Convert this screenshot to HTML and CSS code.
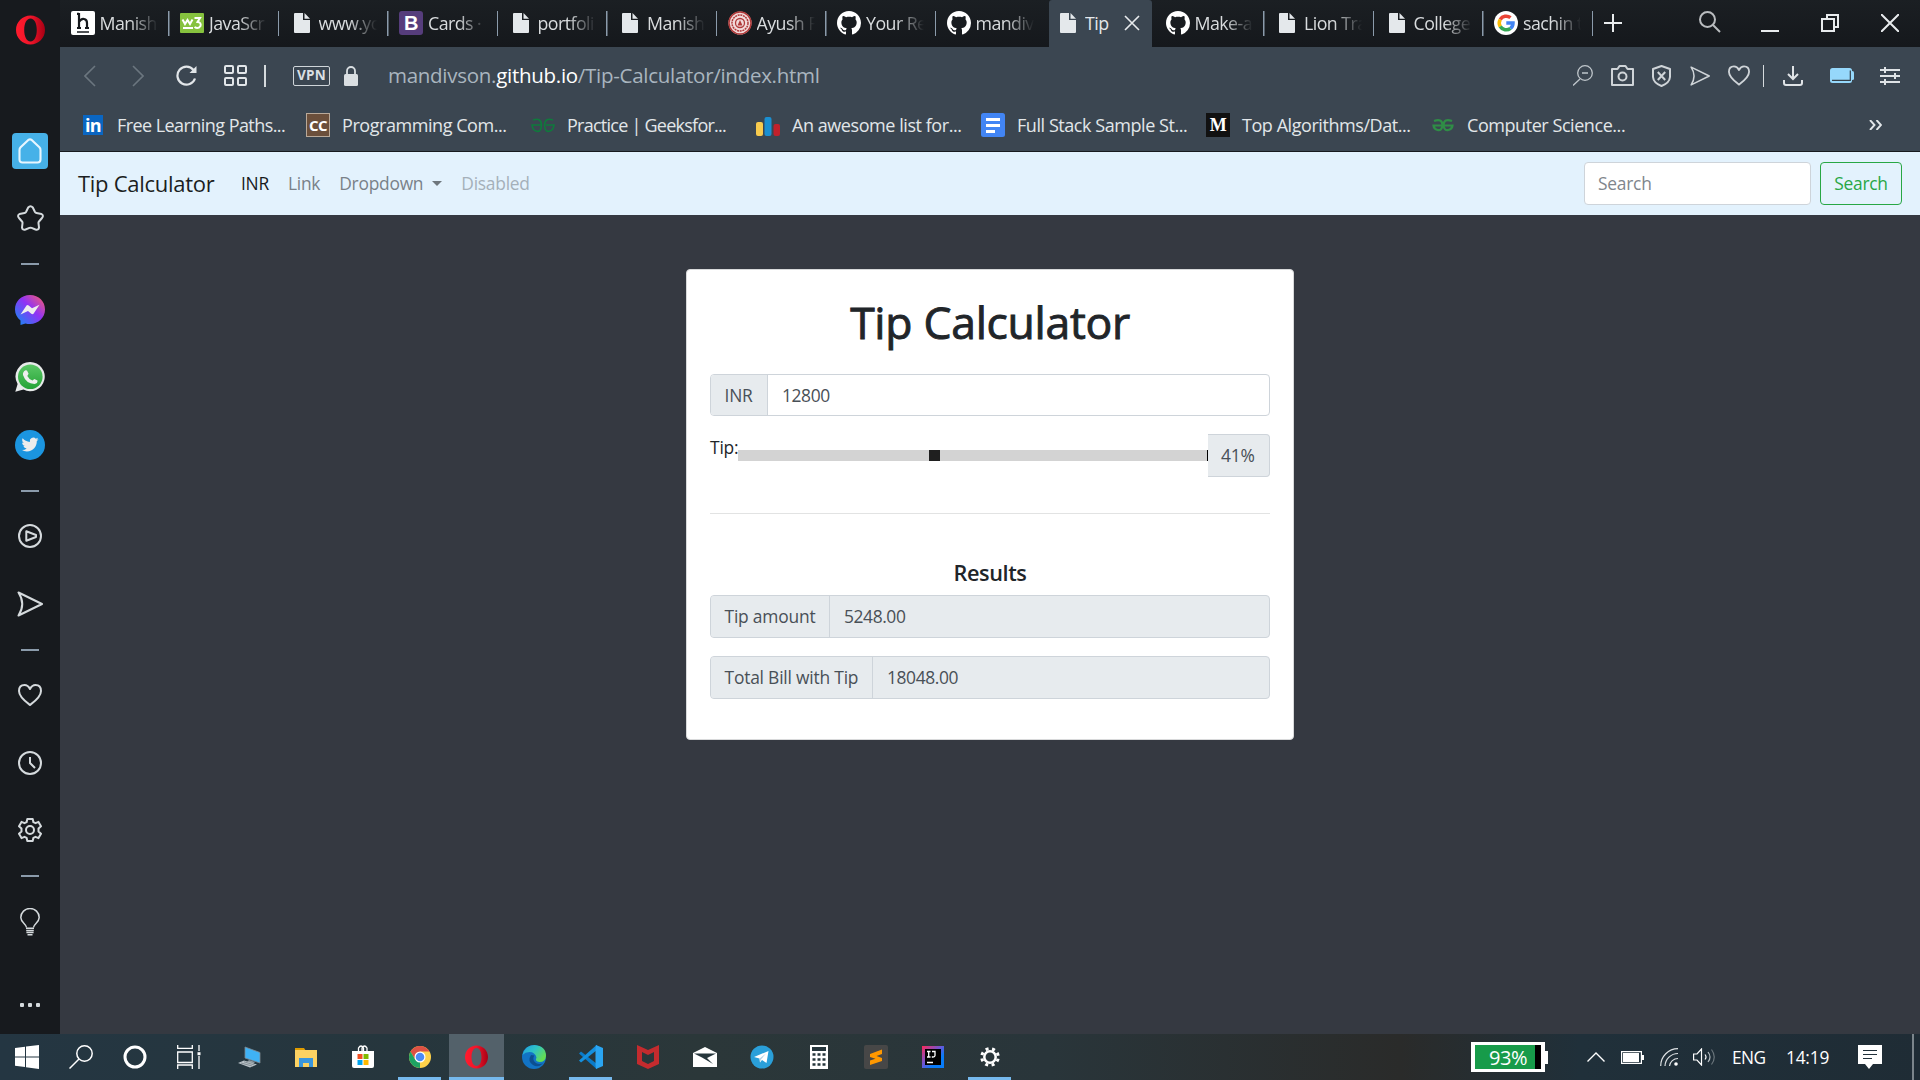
FILE: index.html
```html
<!DOCTYPE html>
<html lang="en">
<head>
<meta charset="utf-8">
<title>Tip Calculator</title>
<link rel="stylesheet" href="styles.css">
</head>
<body>
<svg class="defs" width="0" height="0">
  <defs>
    <linearGradient id="msg" x1="0" y1="1" x2="1" y2="0"><stop offset="0" stop-color="#0a90f5"/><stop offset=".55" stop-color="#9033f5"/><stop offset="1" stop-color="#ff6065"/></linearGradient>
    <linearGradient id="wa" x1="0" y1="0" x2="0" y2="1"><stop offset="0" stop-color="#5bc766"/><stop offset="1" stop-color="#25a336"/></linearGradient>
    <linearGradient id="op" x1="0" y1="0" x2="1" y2="0"><stop offset="0" stop-color="#ff1b2d"/><stop offset=".5" stop-color="#f0152a"/><stop offset="1" stop-color="#a70014"/></linearGradient>
    <linearGradient id="ed" x1="0" y1="0" x2="1" y2=".6"><stop offset="0" stop-color="#1f9ee0"/><stop offset=".5" stop-color="#2fc2c6"/><stop offset="1" stop-color="#65dd50"/></linearGradient>
    <linearGradient id="ij" x1="0" y1="0" x2="1" y2="1"><stop offset="0" stop-color="#fe2857"/><stop offset=".45" stop-color="#6b57d8"/><stop offset=".7" stop-color="#087cfa"/></linearGradient>
    <symbol id="file" viewBox="0 0 16 20"><path d="M0 1Q0 0 1 0H9V7H16V19Q16 20 15 20H1Q0 20 0 19Z" fill="#e4e8eb"/><path d="M10.500 0L16 5.800H10.500Z" fill="#e4e8eb"/></symbol>
    <symbol id="github" viewBox="0 0 16 16"><path fill="#fff" d="M8 0C3.580 0 0 3.580 0 8c0 3.540 2.290 6.530 5.470 7.590.4.070.55-.17.55-.38 0-.19-.01-.82-.01-1.490-2.010.37-2.530-.49-2.690-.94-.09-.23-.48-.94-.82-1.130-.28-.15-.68-.52-.01-.53.63-.01 1.080.58 1.230.82.72 1.210 1.870.87 2.330.66.070-.52.28-.87.51-1.070-1.780-.2-3.640-.89-3.640-3.950 0-.87.31-1.590.82-2.150-.08-.2-.36-1.020.08-2.120 0 0 .67-.21 2.200.82.64-.18 1.320-.27 2-.27s1.360.09 2 .27c1.530-1.040 2.200-.82 2.200-.82.44 1.100.16 1.920.08 2.120.51.56.82 1.270.82 2.150 0 3.070-1.870 3.750-3.650 3.950.29.25.54.73.54 1.480 0 1.070-.01 1.930-.01 2.200 0 .21.15.46.55.38A8.010 8.010 0 0 0 16 8c0-4.420-3.580-8-8-8z"/></symbol>
    <symbol id="heart" viewBox="0 0 24 22"><path d="M12 21C8 18 1 13 1 7Q1 1 6.500 1Q10 1 12 5Q14 1 17.500 1Q23 1 23 7C23 13 16 18 12 21Z" fill="none" stroke="currentColor" stroke-width="2" stroke-linejoin="round"/></symbol>
    <symbol id="send" viewBox="0 0 26 26"><path d="M1.500 1.500L25 13L1.500 24.500Q9 13 1.500 1.500Z" fill="none" stroke="currentColor" stroke-width="2" stroke-linejoin="round"/></symbol>
    <symbol id="opera" viewBox="0 0 30 30"><path fill-rule="evenodd" fill="url(#op)" d="M15 0C23.300 0 30 6.700 30 15S23.300 30 15 30S0 23.300 0 15S6.700 0 15 0ZM15 3.200C10.800 3.200 8.500 8.500 8.500 15S10.800 26.800 15 26.800S21.500 21.500 21.500 15S19.200 3.200 15 3.200Z"/></symbol>
  </defs>
</svg>
<div class="desktop">
  <div class="browser">
    <aside class="sidebar">
      <div class="side-logo"><svg width="29" height="30"><use href="#opera"/></svg></div>
      <div class="side-item"><span class="home"><svg width="24" height="26" viewBox="0 0 24 26" fill="none" stroke="#e8f6ff" stroke-width="2.100" stroke-linejoin="round"><path d="M4.500 24.500Q1.500 24.500 1.500 21.500V12Q1.500 10.500 2.600 9.300L10.300 1.900Q12 .8 13.700 1.900L21.400 9.300Q22.500 10.500 22.500 12V21.500Q22.500 24.500 19.500 24.500Z"/></svg></span></div>
      <div class="side-item"><svg width="27" height="26" viewBox="0 0 27 26" fill="none" stroke="currentColor" stroke-width="2" stroke-linejoin="round"><path d="M11.200 2.500Q13.500 0 15.800 2.500L18 7Q18.500 7.800 19.500 8L24.500 9Q27 10.500 25 13L22 16.500Q21.300 17.300 21.500 18.300L22 22.500Q21.500 25.500 18.500 24.500L14.600 22.900Q13.500 22.500 12.400 22.900L8.500 24.500Q5.500 25.500 5 22.500L5.500 18.300Q5.700 17.300 5 16.500L2 13Q0 10.500 2.500 9L7.500 8Q8.500 7.800 9 7Z"/></svg></div>
      <div class="side-rule"></div>
      <div class="side-item"><svg width="30" height="30" viewBox="0 0 30 30"><path fill="url(#msg)" d="M15 0C24 0 30 6.500 30 14.500S23.500 29 15 29Q12.500 29 10.500 28.400L5.500 30V25.500C2 22.500 0 19 0 14.500C0 6.500 6 0 15 0Z"/><path fill="#eee" d="M5.500 19.500L11.500 10.500Q12.500 9.600 13.700 10.600L17 13.300L24.500 9.700L18.500 18.700Q17.500 19.600 16.300 18.700L13 16Z"/></svg></div>
      <div class="side-item"><svg width="30" height="30" viewBox="0 0 30 30"><path fill="#e8eaea" d="M15.300 0A14.600 14.600 0 1 1 8.500 27.600L.3 29.800L2.600 22A14.600 14.600 0 0 1 15.300 0Z"/><circle cx="15.300" cy="14.800" r="12.300" fill="url(#wa)"/><path fill="#eee" d="M10.600 8.300L12 8.400L13.600 11.800L12.300 14Q14 17.300 17.500 18.600L19.300 16.900L22.500 18.500Q22.800 21.500 19.500 22Q11 21.800 8 13Q7.500 9.800 10.600 8.300Z"/></svg></div>
      <div class="side-item"><svg width="30" height="30" viewBox="0 0 30 30"><circle cx="15" cy="15" r="15" fill="#1b95e0"/><path transform="translate(6.500 6) scale(.71)" fill="#ececec" d="M23.950 4.570a10 10 0 0 1-2.820.77 4.960 4.960 0 0 0 2.160-2.720c-.95.550-2 .96-3.130 1.180a4.920 4.920 0 0 0-8.380 4.480C7.690 8.090 4.070 6.130 1.640 3.160a4.820 4.820 0 0 0-.67 2.480c0 1.710.87 3.210 2.190 4.100a4.900 4.900 0 0 1-2.230-.62v.06a4.920 4.920 0 0 0 3.950 4.830 5 5 0 0 1-2.210.08 4.940 4.940 0 0 0 4.600 3.420A9.870 9.870 0 0 1 0 19.540a14 14 0 0 0 7.550 2.210c9.050 0 14-7.500 14-13.980 0-.21 0-.42-.02-.63a9.940 9.940 0 0 0 2.420-2.570z"/></svg></div>
      <div class="side-rule"></div>
      <div class="side-item"><svg width="24" height="24" viewBox="0 0 24 24" fill="none" stroke="currentColor" stroke-width="2" stroke-linejoin="round"><circle cx="12" cy="12" r="11"/><path d="M8.300 7.300V16.700L18 13V11Z"/></svg></div>
      <div class="side-item"><svg width="26" height="26"><use href="#send"/></svg></div>
      <div class="side-rule"></div>
      <div class="side-item"><svg width="24" height="22"><use href="#heart"/></svg></div>
      <div class="side-item"><svg width="24" height="24" viewBox="0 0 24 24" fill="none" stroke="currentColor" stroke-width="2"><circle cx="12" cy="12" r="11"/><path d="M12 6V12L17 17"/></svg></div>
      <div class="side-item"><svg width="24" height="24" viewBox="0 0 24 24" fill="none" stroke="currentColor" stroke-width="2" stroke-linejoin="round"><circle cx="12" cy="12" r="4"/><path d="M9.300 1H14.700L15.400 4.200L17.500 5.200L20.500 3.900L23 8.200L20.500 10.500V13.500L23 15.800L20.500 20.100L17.500 18.800L15.400 19.800L14.700 23H9.300L8.600 19.800L6.500 18.800L3.500 20.100L1 15.800L3.500 13.500V10.500L1 8.200L3.500 3.900L6.500 5.200L8.600 4.200Z"/></svg></div>
      <div class="side-rule"></div>
      <div class="side-item"><svg width="20" height="28" viewBox="0 0 20 28" fill="none" stroke="currentColor" stroke-width="1.500"><path d="M6.500 19.500C6.500 16 .8 14.500 .8 9.500A9.200 9 0 0 1 19.200 9.500C19.200 14.500 13.500 16 13.500 19.500"/><path d="M6 20.200H14M6.200 22.400H13.800M6.400 24.600H13.600M7.500 26.800H12.500"/></svg></div>
      <div class="side-more"><i></i><i></i><i></i></div>
    </aside>
    <div class="window">
      <div class="tabs">
        <div class="tab"><svg width="24" height="24" viewBox="0 0 24 24"><rect width="24" height="24" rx="2" fill="#fff"/><path d="M8 2V17M8 11Q10 7.500 13 8Q16 8.500 16 12V17M6 17H10M14 17H18M6 2.800H8" fill="none" stroke="#15181c" stroke-width="2.200"/><path d="M6 21H18" stroke="#15181c" stroke-width="1.500"/></svg><span>Manish</span></div>
        <div class="tab"><svg width="24" height="24" viewBox="0 0 24 24"><rect y="2" width="24" height="20" rx="1" fill="#86c23e"/><path d="M2.500 8.500L5 13L7.500 9L10 13L12.500 8.500M3 17H13M14.500 7H20L17.500 11Q21.500 11.500 20.500 15Q18 18.500 14.500 16" fill="none" stroke="#fff" stroke-width="2"/></svg><span>JavaScr</span></div>
        <div class="tab"><svg class="file" width="16" height="20"><use href="#file"/></svg><span>www.yo</span></div>
        <div class="tab"><svg width="24" height="24" viewBox="0 0 24 24"><rect width="24" height="24" rx="3" fill="#563d7c"/><text x="12" y="19" text-anchor="middle" font-family="Liberation Sans" font-size="20" font-weight="700" fill="#fff">B</text></svg><span>Cards ·</span></div>
        <div class="tab"><svg class="file" width="16" height="20"><use href="#file"/></svg><span>portfoli</span></div>
        <div class="tab"><svg class="file" width="16" height="20"><use href="#file"/></svg><span>Manish</span></div>
        <div class="tab"><svg width="24" height="24" viewBox="0 0 24 24"><circle cx="12" cy="12" r="11.500" fill="#f2dada"/><g fill="none" stroke="#b03a3a"><circle cx="12" cy="12" r="11" stroke-width="1.500"/><circle cx="12" cy="12" r="8" stroke-width="1.500" stroke-dasharray="2 .7"/><circle cx="12" cy="12" r="4.500" stroke-width="1.300"/></g><path d="M12 9L14.500 14.500H9.500Z" fill="#b03a3a"/></svg><span>Ayush F</span></div>
        <div class="tab"><svg width="24" height="24"><use href="#github"/></svg><span>Your Re</span></div>
        <div class="tab last"><svg width="24" height="24"><use href="#github"/></svg><span>mandiv</span></div>
        <div class="tab active"><svg class="file" width="16" height="20"><use href="#file"/></svg><span>Tip</span><svg class="close" width="16" height="16" viewBox="0 0 16 16" stroke="#e8ebed" stroke-width="1.600"><path d="M1 1L15 15M15 1L1 15"/></svg></div>
        <div class="tab"><svg width="24" height="24"><use href="#github"/></svg><span>Make-a</span></div>
        <div class="tab"><svg class="file" width="16" height="20"><use href="#file"/></svg><span>Lion Tra</span></div>
        <div class="tab"><svg class="file" width="16" height="20"><use href="#file"/></svg><span>College</span></div>
        <div class="tab"><svg width="24" height="24" viewBox="0 0 24 24"><circle cx="12" cy="12" r="12" fill="#fff"/><g fill="none" stroke-width="3.500"><path d="M6.200 8.500A7 7 0 0 1 16.500 6.700" stroke="#ea4335"/><path d="M6.200 15.500A7 7 0 0 1 6.200 8.500" stroke="#fbbc05"/><path d="M16.500 17.300A7 7 0 0 1 6.200 15.500" stroke="#34a853"/><path d="M12.300 12H19Q19 15.500 16.500 17.300" stroke="#4285f4"/></g></svg><span>sachin t</span></div>
        <svg class="plus" width="18" height="18" viewBox="0 0 18 18" stroke="#e8ebed" stroke-width="2"><path d="M9 0V18M0 9H18"/></svg>
        <div class="controls">
          <svg width="22" height="22" viewBox="0 0 22 22" fill="none" stroke="#b9bcbf" stroke-width="2"><circle cx="8.500" cy="8.500" r="7.500"/><path d="M14 14L21 21"/></svg>
          <svg width="18" height="18" viewBox="0 0 18 18" stroke="#e8ebed" stroke-width="2"><path d="M0 17H18"/></svg>
          <svg width="18" height="18" viewBox="0 0 18 18" fill="none" stroke="#e8ebed" stroke-width="2"><path d="M1 5H13V17H1ZM6 5V1H17V13H13"/></svg>
          <svg width="18" height="18" viewBox="0 0 18 18" stroke="#e8ebed" stroke-width="2"><path d="M0 0L18 18M18 0L0 18"/></svg>
        </div>
      </div>
      <div class="toolbar">
        <div class="nav-keys">
          <svg width="12" height="22" viewBox="0 0 12 22" fill="none" stroke="#6b767f" stroke-width="1.600"><path d="M11 1L1 11L11 21"/></svg>
          <svg width="12" height="22" viewBox="0 0 12 22" fill="none" stroke="#6b767f" stroke-width="1.600"><path d="M1 1L11 11L1 21"/></svg>
          <svg width="21" height="21" viewBox="0 0 21 21" fill="none" stroke="#e2e6e9" stroke-width="2.200"><path d="M19 13.500A9 9 0 1 1 17.500 5"/><path d="M20.500 1V8H13.500Z" fill="#e2e6e9" stroke="none"/></svg>
          <svg width="23" height="21" viewBox="0 0 23 21" fill="none" stroke="#e2e6e9" stroke-width="2"><rect x="1" y="1" width="8" height="7" rx="1"/><rect x="14" y="1" width="8" height="7" rx="1"/><rect x="1" y="13" width="8" height="7" rx="1"/><rect x="14" y="13" width="8" height="7" rx="1"/></svg>
          <i class="bar"></i>
        </div>
        <span class="vpn">VPN</span>
        <svg class="lock" width="14" height="20" viewBox="0 0 14 20"><rect y="8" width="14" height="12" rx="1.500" fill="#dadfe2"/><path d="M3 8V5A4 4 0 0 1 11 5V8" fill="none" stroke="#dadfe2" stroke-width="1.800"/></svg>
        <span class="url">mandivson.<b>github.io</b>/Tip-Calculator/index.html</span>
        <div class="actions">
          <svg width="20" height="21" viewBox="0 0 20 21" fill="none" stroke="#bfc6cb" stroke-width="1.300"><circle cx="12" cy="8" r="7.300"/><path d="M7 14L0 20.500M9 8H15"/></svg>
          <svg width="23" height="21" viewBox="0 0 23 21" fill="none" stroke="#cfd4d8" stroke-width="2"><path d="M1 4H6.500L8.500 1H14.500L16.500 4H22V20H1Z" stroke-linejoin="round"/><circle cx="11.500" cy="11.500" r="4"/></svg>
          <svg width="19" height="22" viewBox="0 0 19 22" fill="none" stroke="#cfd4d8" stroke-width="2"><path d="M9.500 1L18 4V12Q17.500 18 9.500 21Q1.500 18 1 12V4Z" stroke-linejoin="round"/><path d="M5.800 7L13.200 15M13.200 7L5.800 15"/></svg>
          <svg width="20" height="20"><use href="#send"/></svg>
          <svg width="22" height="21"><use href="#heart"/></svg>
          <i class="bar"></i>
          <svg width="20" height="20" viewBox="0 0 20 20" fill="none" stroke="#dfe3e6" stroke-width="2"><path d="M10 0V12M5 8L10 13L15 8M1 14V17Q1 19 3 19H17Q19 19 19 17V14"/></svg>
          <svg width="24" height="15" viewBox="0 0 24 15"><rect width="22" height="15" rx="2.500" fill="#96d8fb"/><rect x="21" y="3" width="3" height="9" rx="1.500" fill="#96d8fb"/><path d="M2 12.300H20.300V2.500" fill="none" stroke="#354049" stroke-width="1.200"/></svg>
          <svg width="20" height="18" viewBox="0 0 20 18" fill="none" stroke="#dfe3e6" stroke-width="2"><path d="M0 3H20M0 9H20M0 15H20M5 0V6M15 6V12M5 12V18"/></svg>
        </div>
      </div>
      <div class="bookmarks">
        <div class="bm"><svg width="24" height="24" viewBox="0 0 24 24"><rect x="2" y="2" width="20" height="20" fill="#0a66c2"/><text x="12" y="19" text-anchor="middle" font-family="Open Sans" font-size="18" font-weight="700" fill="#fff" textLength="16">in</text></svg><span>Free Learning Paths...</span></div>
        <div class="bm"><svg width="24" height="24" viewBox="0 0 24 24"><rect x=".5" y=".5" width="23" height="23" fill="#6b4f3b" stroke="#b9a999"/><text x="12" y="17.500" text-anchor="middle" font-family="Open Sans" font-size="15" font-weight="700" fill="#fff" textLength="18">CC</text></svg><span>Programming Com...</span></div>
        <div class="bm tight"><svg width="24" height="24" viewBox="0 0 24 24" fill="none" stroke="#0f7a3c" stroke-width="1.600"><path d="M2 7Q10 4 10.500 12Q10 20 5 18Q1.500 17 1 12H11M22 7Q14 4 13.500 12Q14 20 19 18Q22.500 17 23 12H15"/></svg><span>Practice | Geeksfor...</span></div>
        <div class="bm"><svg width="24" height="24" viewBox="0 0 24 24"><rect y="9" width="7" height="14" rx="2" fill="#f8cb4e"/><rect x="8.500" y="4" width="7" height="19" rx="2" fill="#1a8fd1"/><rect x="17.500" y="11" width="6.500" height="12" rx="2" fill="#c1212b"/></svg><span>An awesome list for...</span></div>
        <div class="bm"><svg width="24" height="24" viewBox="0 0 24 24"><rect width="24" height="24" rx="2.500" fill="#4285f4"/><path d="M5 6.500H19M5 12.500H19M5 18.500H14" stroke="#fff" stroke-width="3"/></svg><span>Full Stack Sample St...</span></div>
        <div class="bm"><svg width="24" height="24" viewBox="0 0 24 24"><rect width="24" height="24" fill="#111"/><text x="12" y="18" text-anchor="middle" font-family="Liberation Serif" font-size="18" font-weight="700" fill="#fff">M</text></svg><span>Top Algorithms/Dat...</span></div>
        <div class="bm"><svg width="24" height="24" viewBox="0 0 24 24" fill="none" stroke="#2f8d46" stroke-width="2.200"><path d="M3 8Q11 5 11.500 12Q11 18 6.500 17Q3 16 2.500 12.500H21.500Q21 16 17.500 17Q13 18 12.500 12Q13 5 21 8"/></svg><span>Computer Science...</span></div>
        <svg class="more" width="13" height="10" viewBox="0 0 13 10" fill="none" stroke="#e2e6e9" stroke-width="1.900"><path d="M1 0L5.500 5L1 10M7.500 0L12 5L7.500 10"/></svg>
      </div>
      <main class="page">
        <nav class="navbar">
          <span class="brand">Tip Calculator</span>
          <span class="link current">INR</span>
          <span class="link">Link</span>
          <span class="link drop">Dropdown<i class="caret"></i></span>
          <span class="link disabled">Disabled</span>
          <form class="search"><span class="field">Search</span><span class="btn">Search</span></form>
        </nav>
        <section class="card">
          <h1>Tip Calculator</h1>
          <div class="group bill"><span class="label">INR</span><span class="value">12800</span></div>
          <div class="tip-row">
            <span class="tip-name">Tip:</span>
            <div class="track"><i class="knob"></i><i class="end"></i></div>
            <span class="percent">41%</span>
          </div>
          <hr>
          <h2>Results</h2>
          <div class="group off"><span class="label amount">Tip amount</span><span class="value">5248.00</span></div>
          <div class="group off"><span class="label total">Total Bill with Tip</span><span class="value">18048.00</span></div>
        </section>
      </main>
    </div>
  </div>
  <footer class="taskbar">
    <div class="sys">
      <svg width="24" height="24" viewBox="0 0 24 24" fill="#fff"><path d="M0 3L10 1.700V11.400H0ZM11 1.500L24 0V11.400H11ZM0 12.400H10V22L0 20.700ZM11 12.400H24V24L11 22.200Z"/></svg>
      <svg width="24" height="24" viewBox="0 0 24 24" fill="none" stroke="#fff" stroke-width="1.500"><circle cx="15.500" cy="8.500" r="7.700"/><path d="M10 14L.5 23.500"/></svg>
      <svg width="24" height="24" viewBox="0 0 24 24" fill="none" stroke="#fff" stroke-width="3"><circle cx="12" cy="12" r="10"/></svg>
      <svg width="24" height="24" viewBox="0 0 24 24" fill="none" stroke="#fff" stroke-width="1.300"><path d="M.7 0V3.300H15.300V0M.7 7H15.300V17.500H.7ZM.7 24V20H15.300V24M22 0V6M22 11V24"/><path d="M20.500 7.200H23.500V10.200H20.500Z" fill="#fff" stroke="none"/></svg>
    </div>
    <div class="apps">
      <span class="app"><svg width="24" height="24" viewBox="0 0 24 24"><path d="M8 2L23 7.500V18L8 13Z" fill="#3fb2f5" stroke="#7d8a93" stroke-width=".8"/><path d="M12 15L18 17L16 19L10 17Z" fill="#8f9aa1"/><path d="M1 18L7 15.500L20 19.500L13 22.500Z" fill="#b9c2c8"/><path d="M4 18L15 21M7 16.800L17.500 20" stroke="#6d7980" stroke-width=".7"/></svg></span>
      <span class="app"><svg width="24" height="24" viewBox="0 0 24 24"><path d="M1 3H10L12 6H1Z" fill="#e09c00"/><rect x="1" y="5" width="22" height="17" fill="#fdd262"/><path d="M5 22V13H19V22H15V18H9V22Z" fill="#3a96dd"/></svg></span>
      <span class="app"><svg width="24" height="24" viewBox="0 0 24 24"><path d="M7.500 7V3Q10 -1 12.500 3V7M11 7V3Q13.500 -1 16 3V7" fill="none" stroke="#fff" stroke-width="1.300"/><path d="M1 6H23V21Q23 23 21 23H3Q1 23 1 21Z" fill="#fff"/><path d="M6.500 9H11.500V14H6.500Z" fill="#f25022"/><path d="M12.500 9H17.500V14H12.500Z" fill="#7fba00"/><path d="M6.500 15H11.500V20H6.500Z" fill="#00a4ef"/><path d="M12.500 15H17.500V20H12.500Z" fill="#ffb900"/></svg></span>
      <span class="app open"><svg width="24" height="24" viewBox="0 0 24 24"><circle cx="12" cy="12" r="11" fill="#ffd24a"/><path d="M2.500 6.500A11 11 0 0 1 21.500 6.500H12L7.300 14.700Z" fill="#dd5144"/><path d="M2.500 6.500L7.300 14.700L12 17L12 23A11 11 0 0 1 2.500 6.500Z" fill="#1ea362"/><circle cx="12" cy="12" r="5.500" fill="#fff"/><circle cx="12" cy="12" r="4.300" fill="#4c8bf5"/></svg></span>
      <span class="app open selected"><svg width="23" height="24"><use href="#opera"/></svg></span>
      <span class="app"><svg width="24" height="24" viewBox="0 0 24 24"><circle cx="12" cy="12" r="12" fill="#1273c4"/><path d="M.5 10Q3 0 12.500 0Q24 1 24 11Q23.500 17 17.500 17Q12.500 16.500 14.500 12.500Q13 7 7.500 7Q3 7.200 .5 10Z" fill="url(#ed)"/><path d="M9 10Q5 16 11 20Q16 23 21 18.500Q14.500 20 12 16Q10.500 13 12.500 10.500Z" fill="#0c4f91"/></svg></span>
      <span class="app open"><svg width="24" height="24" viewBox="0 0 24 24"><path d="M0 8.500L2 6.500L18 19V24L17 23.600Z" fill="#0a7bc9"/><path d="M0 15.500L2 17.500L18 5V0L17 .4Z" fill="#1590df"/><path d="M17 0L24 3V21L17 24L16.500 20V4Z" fill="#2aa5f2"/></svg></span>
      <span class="app"><svg width="22" height="24" viewBox="0 0 22 24"><path d="M0 0L11 5L22 0V19L11 24L0 19ZM5 7V16L11 19L17 16V7L11 10Z" fill="#c42b2e" fill-rule="evenodd"/></svg></span>
      <span class="app"><svg width="24" height="20" viewBox="0 0 24 20"><path d="M0 6L12 0L24 6V20H0Z" fill="#fff"/><path d="M1 6.500H23L14 11L20 17L9 10.500Z" fill="#26363c"/></svg></span>
      <span class="app"><svg width="24" height="24" viewBox="0 0 24 24"><circle cx="12" cy="12" r="11.500" fill="#2a9fd9"/><path d="M4 12L18.500 6L16.500 18L12 15L10 17.500L9.500 13.500Z" fill="#fff"/><path d="M9.500 13.500L16 8.500L11 14.500L10 17.500Z" fill="#b8d4e8"/></svg></span>
      <span class="app"><svg width="18" height="24" viewBox="0 0 18 24"><rect width="18" height="24" fill="#fff"/><path d="M2 2H16V6H2Z" fill="#26363c"/><path d="M2.500 9.500H16M2.500 14.500H16M2.500 19.500H16" stroke="#26363c" stroke-width="2.500" stroke-dasharray="3 2"/></svg></span>
      <span class="app"><svg width="24" height="24" viewBox="0 0 24 24"><rect width="24" height="24" rx="2" fill="#474747"/><path d="M6 9L18 4.500V9L12.500 11L18 13V16L6 20V15.500L11.500 13.700L6 12Z" fill="#ff9800"/></svg></span>
      <span class="app"><svg width="22" height="22" viewBox="0 0 22 22"><rect width="22" height="22" fill="url(#ij)"/><rect x="3" y="3" width="16" height="16" fill="#000"/><path d="M5 5.500H8.500M6.700 5.500V11M5 11H8.500M10 5.500H13V9.500Q13 11 11 11H9.800M5 16.500H11" fill="none" stroke="#fff" stroke-width="1.300"/></svg></span>
      <span class="app open"><svg width="20" height="20" viewBox="0 0 20 20" fill="none" stroke="#fff"><circle cx="10" cy="10" r="5.700" stroke-width="2.500"/><circle cx="10" cy="10" r="8.300" stroke-width="3" stroke-dasharray="3 3.520" stroke-dashoffset="-1.800"/></svg></span>
    </div>
    <div class="tray">
      <span class="charge"><b>93%</b></span>
      <svg class="t-up" width="18" height="10" viewBox="0 0 18 10" fill="none" stroke="#fff" stroke-width="1.400"><path d="M.5 9.500L9 1L17.500 9.500"/></svg>
      <svg class="t-bat" width="23" height="13" viewBox="0 0 23 13"><path d="M.6 .6H20.400V12.400H.6Z" fill="none" stroke="#fff" stroke-width="1.200"/><path d="M2 2H18V11H2ZM21 4H23V9H21Z" fill="#fff"/></svg>
      <svg class="t-wifi" width="18" height="18" viewBox="0 0 18 18" fill="none" stroke="#dfe3e5" stroke-width="1.200"><path d="M.7 18A17.300 17.300 0 0 1 18 .7M5 18A13 13 0 0 1 18 5.500M9.500 18A8.500 8.500 0 0 1 18 10.500"/><circle cx="16" cy="16" r="1.800" fill="#fff" stroke="none"/></svg>
      <svg class="t-vol" width="22" height="18" viewBox="0 0 22 18" fill="none" stroke="#fff" stroke-width="1.200"><path d="M.6 6H4L8.500 1V17L4 12H.6ZM12 6.500Q14 9 12 11.500"/><path d="M15 4Q19 9 15 14" stroke="#b7bfc3"/><path d="M18.500 1.500Q24 9 18.500 16.500" stroke="#6a757b"/></svg>
      <span class="lang">ENG</span>
      <span class="clock">14:19</span>
      <svg class="t-note" width="24" height="24" viewBox="0 0 24 24"><path d="M0 0H24V19H15L11 24L7 19H0Z" fill="#fff"/><path d="M5 5.500H19M5 9.500H19M5 13.500H14" stroke="#20303a" stroke-width="1.200"/></svg>
      <i class="show"></i>
    </div>
  </footer>
</div>
</body>
</html>
```
FILE: styles.css
```css
* { box-sizing: border-box; }
body { margin: 0; font-family: "Open Sans", "Noto Sans", sans-serif; color: #212529; overflow: hidden; }
svg { display: block; flex: none; }
.defs { position: absolute; }
.desktop { width: 1920px; height: 1080px; display: flex; flex-direction: column; }
.browser { height: 1034px; display: flex; background: #171a1e; }

/* sidebar */
.sidebar { width: 60px; color: #d5dadd; flex: none; }
.side-logo { height: 117px; padding: 15px 0 0 15.500px; }
.side-item { height: 67.500px; display: flex; align-items: center; justify-content: center; }
.home { width: 36px; height: 36px; border-radius: 4px; background: #46b1e8; display: flex; align-items: center; justify-content: center; }
.side-rule { height: 24px; display: flex; align-items: center; justify-content: center; }
.side-rule::before { content: ""; width: 18px; height: 2px; background: #8b9bab; }
.side-more { height: 99px; display: flex; gap: 4px; align-items: center; justify-content: center; }
.side-more i { width: 4px; height: 4px; border-radius: 1px; background: #d5dadd; }

/* tabs */
.window { flex: 1; min-width: 0; display: flex; flex-direction: column; }
.tabs { height: 47px; display: flex; background: linear-gradient(#1b1f23, #15181c); }
.tab { width: 109.500px; flex: none; display: flex; align-items: center; padding: 1px 12px 2px 10.500px; background: linear-gradient(#8b9bab, #8b9bab) right 0 top 11px / 1.500px 25px no-repeat; font-size: 17.800px; letter-spacing: -.55px; color: #d9dcde; }
.tab span { margin-left: 5px; width: 60px; flex: none; overflow: hidden; white-space: nowrap; -webkit-mask-image: linear-gradient(90deg, #000 50%, transparent 97%); mask-image: linear-gradient(90deg, #000 50%, transparent 97%); }
.tab .file { margin: 0 4px; }
.tab.last { width: 113px; background: none; }
.tab.active { width: 103px; margin-right: 3px; background: #3b4651; border-radius: 3px 3px 0 0; padding-left: 7px; }
.tab.active span { width: 26px; -webkit-mask: none; mask: none; color: #e4e8eb; }
.close { margin-left: 13px; }
.plus { margin: 14px 0 0 11px; }
.controls { margin-left: auto; margin-right: 21px; display: flex; padding-top: 14px; }
.controls svg:first-child { margin-top: -3px; margin-right: 40px; }
.controls svg + svg { margin-right: 42px; }
.controls svg:last-child { margin-right: 0; }

/* address row */
.toolbar { height: 57px; background: #3b4651; display: flex; align-items: center; padding: 0 5.500px 0 6px; }
.nav-keys { display: grid; grid-template-columns: 48px 48px 49px 48px 12px; align-items: center; justify-items: center; }
.bar { width: 2px; height: 22px; background: #d5dadd; }
.actions .bar { width: 1px; }
.vpn { margin-left: 22px; width: 37px; height: 20px; border: 1.500px solid #cfd5d9; border-radius: 2px; font-size: 13.500px; font-weight: 700; line-height: 17px; text-align: center; color: #dadfe2; letter-spacing: .2px; }
.lock { margin-left: 14px; }
.url { margin-left: 30px; padding-bottom: 2px; font-size: 20.500px; letter-spacing: -.28px; line-height: 28px; color: #a9b5bf; white-space: nowrap; }
.url b { font-weight: 400; color: #fff; }
.actions { margin-left: auto; color: #cfd4d8; display: grid; grid-template-columns: repeat(5, 39px) 9px 50px 48px 49px; align-items: center; justify-items: center; }

/* bookmarks */
.bookmarks { height: 48px; background: #3b4651; border-bottom: 1px solid #171a1e; display: flex; padding: 0 38px 6px 21px; }
.bm { width: 225px; flex: none; display: flex; align-items: center; gap: 12px; font-size: 18px; letter-spacing: -.44px; color: #e2e6e9; white-space: nowrap; }
.bm:first-child { letter-spacing: -.56px; }
.bm.tight { letter-spacing: -.75px; }
.more { margin: 16px 0 0 auto; }

/* page */
.page { flex: 1; background: #353941; }
.navbar { height: 63px; background: #e3f2fd; display: flex; align-items: center; padding: 0 18px 1px; font-size: 17.400px; letter-spacing: -.25px; }
.brand { width: 163px; font-size: 22px; letter-spacing: -.28px; color: #1b1e21; white-space: nowrap; }
.link { color: #798188; margin-right: 19px; }
.link.current { color: #17191c; }
.link.drop { display: flex; align-items: center; }
.link.disabled { color: #a5b0b9; }
.caret { margin-left: 9px; border: 5.500px solid transparent; border-top-color: #6f777d; border-bottom: 0; }
.search { margin: 1px 0 0 auto; display: flex; gap: 9px; }
.field { width: 227px; height: 43px; border: 1px solid #ced4da; border-radius: 4px; background: #fff; padding: 0 13px; line-height: 41px; color: #7f868c; }
.btn { width: 82px; height: 43px; border: 1px solid #28a745; border-radius: 4px; color: #28a745; line-height: 41px; text-align: center; }
.card { width: 608px; height: 471px; margin: 54px auto 0 626px; background: #fff; border: 1px solid #d8d9da; border-radius: 4px; padding: 25px 23px 0; font-size: 17.400px; letter-spacing: -.2px; }
.card h1 { margin: 0; height: 79px; line-height: 54px; font-size: 44.500px; font-weight: 400; letter-spacing: -.3px; -webkit-text-stroke: .9px #212529; text-align: center; }
.group { display: flex; height: 43px; border: 1px solid #ced4da; border-radius: 4px; color: #495057; line-height: 41px; margin-bottom: 18px; white-space: nowrap; }
.label { width: 57px; padding-left: 13.500px; background: #e7ebee; border-right: 1px solid #ced4da; border-radius: 3px 0 0 3px; }
.value { padding-left: 14px; letter-spacing: -.4px; }
.bill { height: 42px; line-height: 40px; margin-bottom: 18px; }
.off { background: #e7ebee; }
.amount { width: 119px; }
.total { width: 162px; }
.tip-row { display: flex; height: 43px; align-items: center; }
.tip-name { width: 28px; align-self: flex-start; line-height: 27px; }
.track { flex: 1; height: 11px; background: #d3d3d3; display: flex; justify-content: space-between; }
.knob { width: 11px; margin-left: 191px; background: #1f1f1f; }
.end { width: 1px; background: #000; }
.percent { width: 62px; height: 43px; line-height: 41px; padding-left: 13px; border: 1px solid #ced4da; border-left: 0; border-radius: 0 4px 4px 0; background: #e7ebee; color: #495057; }
.card hr { margin: 36px 0 0; border: 0; border-top: 1px solid #e2e3e3; }
.card h2 { margin: 45px 0 8px; font-size: 21.700px; line-height: 28px; font-weight: 600; letter-spacing: -.4px; text-align: center; }

/* taskbar */
.taskbar { height: 46px; display: flex; background: linear-gradient(90deg, #243642 0, #26363d 400px, #2b3739 700px, #29353a 1050px, #2a2b2a 1400px, #20303a 1580px, #1f2c35 1920px); color: #fff; }
.sys { display: grid; grid-template-columns: repeat(4, 54px); align-items: center; justify-items: center; margin-right: 4px; }
.apps { display: flex; }
.app { width: 57px; display: flex; align-items: center; justify-content: center; }
.open { background: linear-gradient(#76b9ed, #76b9ed) center bottom / 43px 3px no-repeat; }
.selected { width: 55px; margin: 0 1px; background: linear-gradient(#76b9ed, #76b9ed) bottom / 100% 3px no-repeat, #53616a; }
.tray { margin-left: auto; display: flex; align-items: center; }
.charge { position: relative; width: 74px; height: 30px; border: solid #fff; border-width: 3px 4px; background: linear-gradient(90deg, #179b4a 60px, #000 60px); background-origin: padding-box; text-align: center; line-height: 26px; margin-right: 42px; }
.charge b { font-weight: 400; font-size: 20px; letter-spacing: -.4px; }
.charge::after { content: ""; position: absolute; right: -7px; top: 6px; width: 4px; height: 13px; background: #fff; }
.t-bat { margin-left: 16px; }
.t-wifi { margin-left: 16px; }
.t-vol { margin-left: 15px; }
.lang { margin-left: 17px; width: 36px; font-size: 17.300px; letter-spacing: -.6px; }
.clock { margin-left: 18px; width: 45px; font-size: 17.300px; letter-spacing: -.2px; }
.t-note { margin-left: 27px; }
.show { width: 2px; height: 46px; margin: 0 6px 0 30px; background: #7b858b; }
```
